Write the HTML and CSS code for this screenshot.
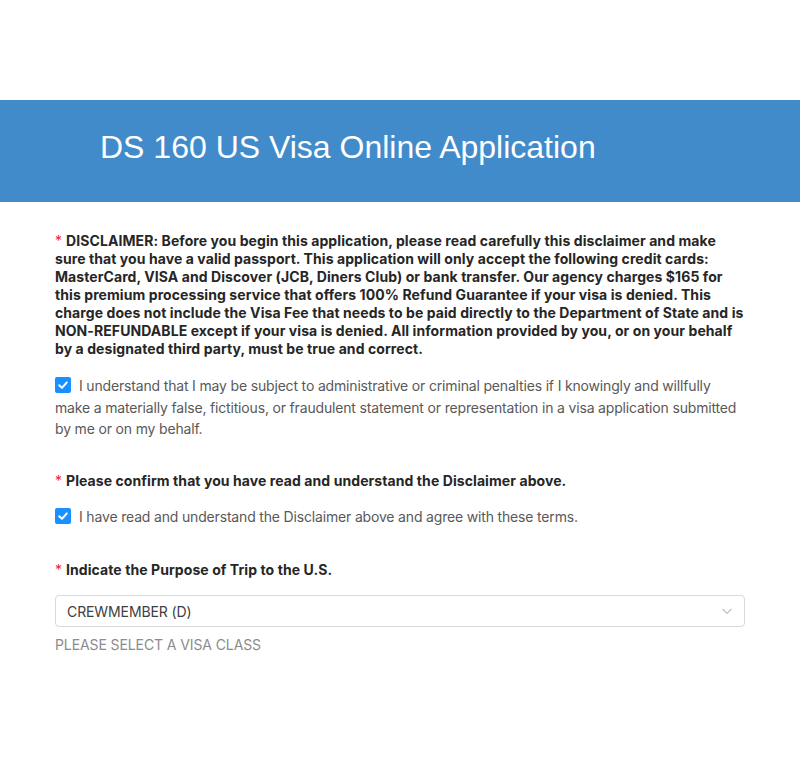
FILE: index.html
```html
<!DOCTYPE html>
<html lang="en">
<head>
<meta charset="utf-8">
<title>DS 160 US Visa Online Application</title>
<link rel="stylesheet" href="styles.css">
</head>
<body>
<div class="top-space"></div>
<header class="banner">
  <h1 class="banner-title">DS 160 US Visa Online Application</h1>
</header>
<main class="form">
  <p class="label disclaimer"><span class="req">*</span>DISCLAIMER: Before you begin this application, please read carefully this disclaimer and make sure that you have a valid passport. This application will only accept the following credit cards: MasterCard, VISA and Discover (JCB, Diners Club) or bank transfer. Our agency charges $165 for this premium processing service that offers 100% Refund Guarantee if your visa is denied. This charge does not include the Visa Fee that needs to be paid directly to the Department of State and is NON-REFUNDABLE except if your visa is denied. All information provided by you, or on your behalf by a designated third party, must be true and correct.</p>
  <label class="check check-first"><span class="box"><svg viewBox="0 0 16 16" width="16" height="16"><path d="M4.2 8.2 L7 10.8 L11.8 5.4" fill="none" stroke="#fff" stroke-width="2" stroke-linecap="round" stroke-linejoin="round"/></svg></span><span class="check-text">I understand that I may be subject to administrative or criminal penalties if I knowingly and willfully make a materially false, fictitious, or fraudulent statement or representation in a visa application submitted by me or on my behalf.</span></label>
  <p class="label confirm"><span class="req">*</span>Please confirm that you have read and understand the Disclaimer above.</p>
  <label class="check check-second"><span class="box"><svg viewBox="0 0 16 16" width="16" height="16"><path d="M4.2 8.2 L7 10.8 L11.8 5.4" fill="none" stroke="#fff" stroke-width="2" stroke-linecap="round" stroke-linejoin="round"/></svg></span><span class="check-text">I have read and understand the Disclaimer above and agree with these terms.</span></label>
  <p class="label purpose"><span class="req">*</span>Indicate the Purpose of Trip to the U.S.</p>
  <div class="select">
    <span class="select-value">CREWMEMBER (D)</span>
    <svg class="chev" viewBox="0 0 12 12" width="12" height="12"><path d="M1.5 4 L6 8.5 L10.5 4" fill="none" stroke="#bfbfbf" stroke-width="1.1"/></svg>
  </div>
  <p class="help">PLEASE SELECT A VISA CLASS</p>
</main>
</body>
</html>
```

FILE: styles.css
```css
* { box-sizing: border-box; }
html, body { margin: 0; padding: 0; background: #fff; }
body {
  font-family: Inter, "Noto Sans", "Liberation Sans", sans-serif;
  font-size: 14px;
  color: #262626;
}
.top-space { height: 100px; }
.banner {
  background: #428bca;
  height: 102px;
  display: flex;
  align-items: center;
  padding: 0 100px;
}
.banner-title {
  margin: 0;
  font-family: "Liberation Sans", Arial, sans-serif;
  font-weight: 400;
  font-size: 32px;
  color: #fff;
  line-height: 1;
  padding-bottom: 8px;
}
.form {
  padding: 30px 55px 40px;
}
.label {
  margin: 0;
  font-weight: 700;
  color: #262626;
  line-height: 18px;
  letter-spacing: 0.08px;
}
.req {
  color: #f5222d;
  font-weight: 400;
  letter-spacing: 0;
  margin-right: 4px;
}
.check {
  display: block;
  color: #595959;
  line-height: 21.5px;
  letter-spacing: -0.17px;
}
.check-first { margin-top: 17px; }
.box {
  display: inline-flex;
  width: 16px;
  height: 16px;
  background: #1890ff;
  border-radius: 2px;
  vertical-align: -2px;
}
.check-text { padding-left: 8px; }
.confirm { margin-top: 32px; }
.check-second { margin-top: 16px; }
.purpose { margin-top: 34px; }
.select {
  margin-top: 16px;
  height: 32px;
  border: 1px solid #d9d9d9;
  border-radius: 4px;
  display: flex;
  align-items: center;
  justify-content: space-between;
  padding: 0 11px;
  color: #404040;
  letter-spacing: -0.1px;
}
.help {
  margin: 8px 0 0;
  color: #8c8c8c;
  line-height: 20px;
  letter-spacing: -0.1px;
}
```
